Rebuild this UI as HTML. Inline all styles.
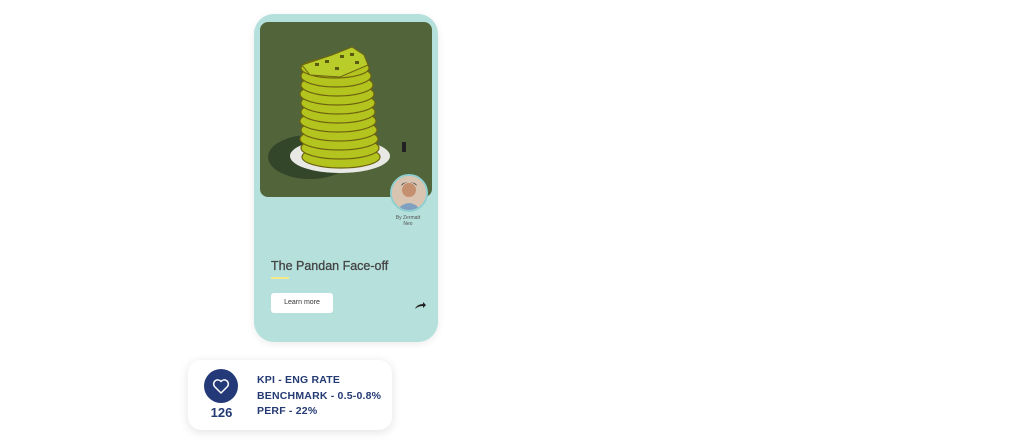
<!DOCTYPE html>
<html><head><style>
body{margin:0;width:1024px;height:445px;background:#fff;position:relative;overflow:hidden;font-family:"Liberation Sans",sans-serif}
.card{position:absolute;left:254px;top:14px;width:184px;height:328px;background:#b5e0db;border-radius:20px;box-shadow:0 2px 8px rgba(0,0,0,.08)}
.img{position:absolute;left:260px;top:22px;width:172px;height:175px;background:#52653a;border-radius:8px;overflow:hidden}
.av{position:absolute;left:390px;top:174px;width:34px;height:34px;border-radius:50%;background:#e8c8a0;border:2px solid #8fcfd0;overflow:hidden}
.by{position:absolute;left:388px;top:215px;width:40px;text-align:center;font-size:5px;color:#555;line-height:6px}
.t{position:absolute;left:271px;top:259px;font-size:12.5px;color:#444;-webkit-text-stroke:.3px #444}
.yl{position:absolute;left:271px;top:277px;width:18px;height:2px;background:#f4ea8a}
.btn{position:absolute;left:271px;top:293px;width:62px;height:20px;background:#fff;border-radius:3px;font-size:7px;color:#333;text-align:center;line-height:20px}
.kpi{position:absolute;left:188px;top:360px;width:204px;height:70px;background:#fff;border-radius:13px;box-shadow:0 2px 10px rgba(0,0,0,.12)}
.c{position:absolute;left:204px;top:369px;width:34px;height:34px;border-radius:50%;background:#243a78}
.n{position:absolute;left:205px;top:405px;width:33px;text-align:center;font-weight:bold;font-size:13px;color:#243a73}
.k{position:absolute;left:257px;font-weight:bold;font-size:10.5px;color:#243a73;letter-spacing:.2px}
</style></head><body>
<div class="card"></div>
<div class="img"><svg width="172" height="175">
<ellipse cx="50" cy="135" rx="42" ry="22" fill="#34462a"/>
<ellipse cx="80" cy="134" rx="50" ry="17" fill="#e8e8e4"/>
<g transform="translate(0,3)">
<g fill="#b3c41e" stroke="#6e6410" stroke-width="1.2">
<ellipse cx="81" cy="132" rx="39" ry="11"/><ellipse cx="80" cy="123" rx="39" ry="11"/><ellipse cx="79" cy="114" rx="39" ry="11"/><ellipse cx="79" cy="105" rx="38" ry="11"/><ellipse cx="78" cy="96" rx="38" ry="11"/><ellipse cx="78" cy="87" rx="37" ry="11"/><ellipse cx="78" cy="78" rx="37" ry="11"/><ellipse cx="77" cy="69" rx="37" ry="11"/><ellipse cx="77" cy="60" rx="36" ry="11"/><ellipse cx="76" cy="51" rx="35" ry="11"/><ellipse cx="75" cy="43" rx="34" ry="10"/>
</g>
<path d="M42 40 L72 30 L92 22 L104 30 L108 40 L80 52 L50 50Z" fill="#b8cc2a" stroke="#6e6410"/>
<g fill="#5a5a10"><rect x="55" y="38" width="4" height="3"/><rect x="65" y="35" width="4" height="3"/><rect x="80" y="30" width="4" height="3"/><rect x="90" y="28" width="4" height="3"/><rect x="95" y="36" width="4" height="3"/><rect x="75" y="42" width="4" height="3"/></g>
</g>
<rect x="142" y="120" width="4" height="10" fill="#222"/>
</svg></div>
<div class="av"><svg width="34" height="34"><rect width="34" height="34" fill="#d8c4b0"/><circle cx="17" cy="14" r="7" fill="#c49070"/><path d="M9 10 Q17 2 25 10 L24 8 Q17 4 10 8Z" fill="#222"/><path d="M5 34 Q17 20 29 34Z" fill="#7fa0c0"/></svg></div>
<div class="by">By Zermatt<br>Neo</div>
<div class="t">The Pandan Face-off</div>
<div class="yl"></div>
<div class="btn">Learn more</div>
<svg style="position:absolute;left:414px;top:300px" width="12" height="10"><path d="M1 9 Q3 4 9 4 L9 2 L12 5 L9 8 L9 6 Q4 6 1 9Z" fill="#222"/></svg>
<div class="kpi"></div>
<div class="c"><svg width="34" height="34"><path d="M17 24 L10.5 17.5 A3.6 3.6 0 0 1 17 12.5 A3.6 3.6 0 0 1 23.5 17.5Z" fill="none" stroke="#fff" stroke-width="1.5" stroke-linejoin="round"/></svg></div>
<div class="n">126</div>
<div class="k" style="top:374px">KPI - ENG RATE</div>
<div class="k" style="top:390px">BENCHMARK - 0.5-0.8%</div>
<div class="k" style="top:405px">PERF - 22%</div>
</body></html>
